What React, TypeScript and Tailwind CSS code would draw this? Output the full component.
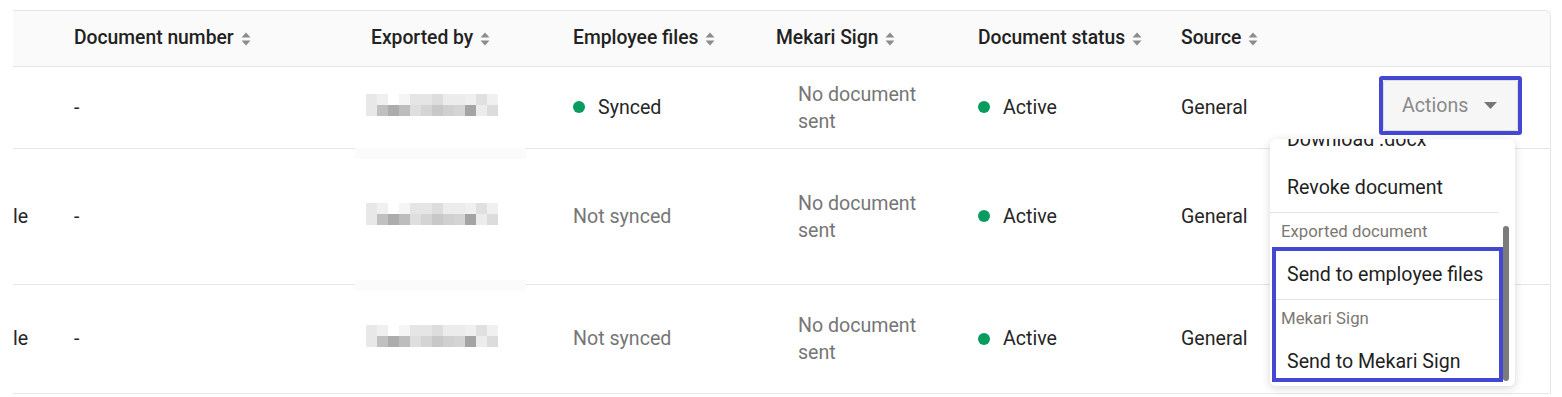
import React from "react";

const grid = "grid grid-cols-[45px_297px_202px_203px_202px_203px_205px_1fr]";

const pixelsTop = [
  "bg-[#e8e8e8]", "bg-[#f0f0f0]", "bg-[#ffffff]", "bg-[#f5f5f5]", "bg-[#e5e5e5]", "bg-[#e5e5e5]",
  "bg-[#dddddd]", "bg-[#ececec]", "bg-[#ececec]", "bg-[#f0f0f0]", "bg-[#e0e0e0]", "bg-[#f0f0f0]",
];
const pixelsBottom = [
  "bg-[#e8e8e8]", "bg-[#c0c0c0]", "bg-[#acacac]", "bg-[#bdbdbd]", "bg-[#dedede]", "bg-[#d4d4d4]",
  "bg-[#c8c8c8]", "bg-[#d0d0d0]", "bg-[#d4d4d4]", "bg-[#a4a4a4]", "bg-[#ececec]", "bg-[#dcdcdc]",
];

function SortIcon() {
  return (
    <svg width="10" height="14" viewBox="0 0 10 14" className="shrink-0">
      <path d="M5 0.5 L9.5 5.5 H0.5 Z" fill="#8c8c8c" />
      <path d="M5 13.5 L9.5 8.5 H0.5 Z" fill="#8c8c8c" />
    </svg>
  );
}

function HeaderCell({ label }: { label?: string }) {
  return (
    <div className="flex items-center gap-[7px] pl-4">
      {label ? (
        <>
          <span>{label}</span>
          <SortIcon />
        </>
      ) : null}
    </div>
  );
}

function Blurred() {
  return (
    <div className="-mt-[6px] flex flex-col">
      <div className="flex">
        {pixelsTop.map((c, i) => (
          <span key={i} className={`h-[11px] w-[11px] ${c}`} />
        ))}
      </div>
      <div className="flex">
        {pixelsBottom.map((c, i) => (
          <span key={i} className={`h-[11px] w-[11px] ${c}`} />
        ))}
      </div>
    </div>
  );
}

function Dot() {
  return <span className="h-[12px] w-[12px] shrink-0 rounded-full bg-[#0a9b5f]" />;
}

type Row = {
  lead: string;
  synced: boolean;
  height: string;
  band?: string;
  actions?: boolean;
};

const rows: Row[] = [
  { lead: "", synced: true, height: "h-[81px]", actions: true },
  { lead: "le", synced: false, height: "h-[135px]", band: "-top-[1px]" },
  { lead: "le", synced: false, height: "h-[108px]", band: "-top-[5px]" },
];

function TableRow({ row }: { row: Row }) {
  return (
    <div className={`${grid} ${row.height} box-content border-b border-[#e6e6e6] text-[#262626]`}>
      <div className="flex items-center">{row.lead}</div>
      <div className="flex items-center pl-4">-</div>
      <div className="relative flex items-center pl-[11px]">
        {row.band ? <div className={`absolute left-0 ${row.band} h-[11px] w-[171px] bg-[#fbfbfb]`} /> : null}
        <Blurred />
      </div>
      <div className="flex items-center pl-4">
        {row.synced ? (
          <span className="flex items-center gap-[13px]">
            <Dot />
            Synced
          </span>
        ) : (
          <span className="text-[#767676]">Not synced</span>
        )}
      </div>
      <div className="flex items-center pl-[38px]">
        <span className="max-w-[130px] leading-[27px] text-[#767676]">No document sent</span>
      </div>
      <div className="flex items-center pl-4">
        <span className="flex items-center gap-[13px]">
          <Dot />
          Active
        </span>
      </div>
      <div className="flex items-center pl-4">General</div>
      <div className="flex items-center pl-[9px]">
        {row.actions ? (
          <div className="-mt-[4px] rounded-[3px] border-[4px] border-[#4447d1]">
            <button className="flex h-[51px] w-[135px] items-center justify-between rounded-[3px] border border-[#dcdcdc] bg-[#f6f6f6] pl-[18px] pr-[20px] text-[#8a8a8a]">
              Actions
              <svg width="13" height="7" viewBox="0 0 13 7">
                <path d="M0 0 H13 L6.5 7 Z" fill="#767676" />
              </svg>
            </button>
          </div>
        ) : null}
      </div>
    </div>
  );
}

function MenuItem({ label }: { label: string }) {
  return <div className="flex h-[48px] items-center pl-[17px] text-[#1f1f1f]">{label}</div>;
}

function MenuLabel({ label, height }: { label: string; height: string }) {
  return <div className={`flex ${height} items-center pl-[11px] text-[16.8px] text-[#7d7772]`}>{label}</div>;
}

function ActionsMenu() {
  return (
    <div className="absolute left-[1257px] top-[128px] h-[247px] w-[245px] overflow-hidden rounded-[6px] bg-white shadow-[0_2px_8px_rgba(0,0,0,0.16)]">
      <div className="-mt-[23px] w-[228px]">
        <MenuItem label="Download .docx" />
        <MenuItem label="Revoke document" />
        <div className="h-px bg-[#e3e3e3]" />
        <MenuLabel label="Exported document" height="h-[38px]" />
        <MenuItem label="Send to employee files" />
        <div className="ml-[6px] h-px bg-[#e3e3e3]" />
        <MenuLabel label="Mekari Sign" height="h-[38px]" />
        <MenuItem label="Send to Mekari Sign" />
      </div>
      <div className="absolute left-[233px] top-[87px] h-[155px] w-[6px] rounded-full bg-[#7b7b7b]" />
      <div className="absolute left-[2px] top-[108px] h-[135px] w-[231px] border-[4px] border-[#4447d1]" />
    </div>
  );
}

export default function App() {
  return (
    <div className="h-[397px] w-[1562px] overflow-hidden bg-white pt-[10px] font-['Roboto',sans-serif] text-[19.6px]">
      <div className="relative ml-[13px] w-[1538px] rounded-tr-[6px] border-r border-t border-[#e6e6e6]">
        <div className={`${grid} box-content h-[55px] rounded-tr-[6px] border-b border-[#e6e6e6] bg-[#fafafa] text-[19.3px] font-medium text-[#222222]`}>
          <div />
          <HeaderCell label="Document number" />
          <HeaderCell label="Exported by" />
          <HeaderCell label="Employee files" />
          <HeaderCell label="Mekari Sign" />
          <HeaderCell label="Document status" />
          <HeaderCell label="Source" />
          <div />
        </div>
        {rows.map((row, i) => (
          <TableRow key={i} row={row} />
        ))}
        <ActionsMenu />
      </div>
    </div>
  );
}
